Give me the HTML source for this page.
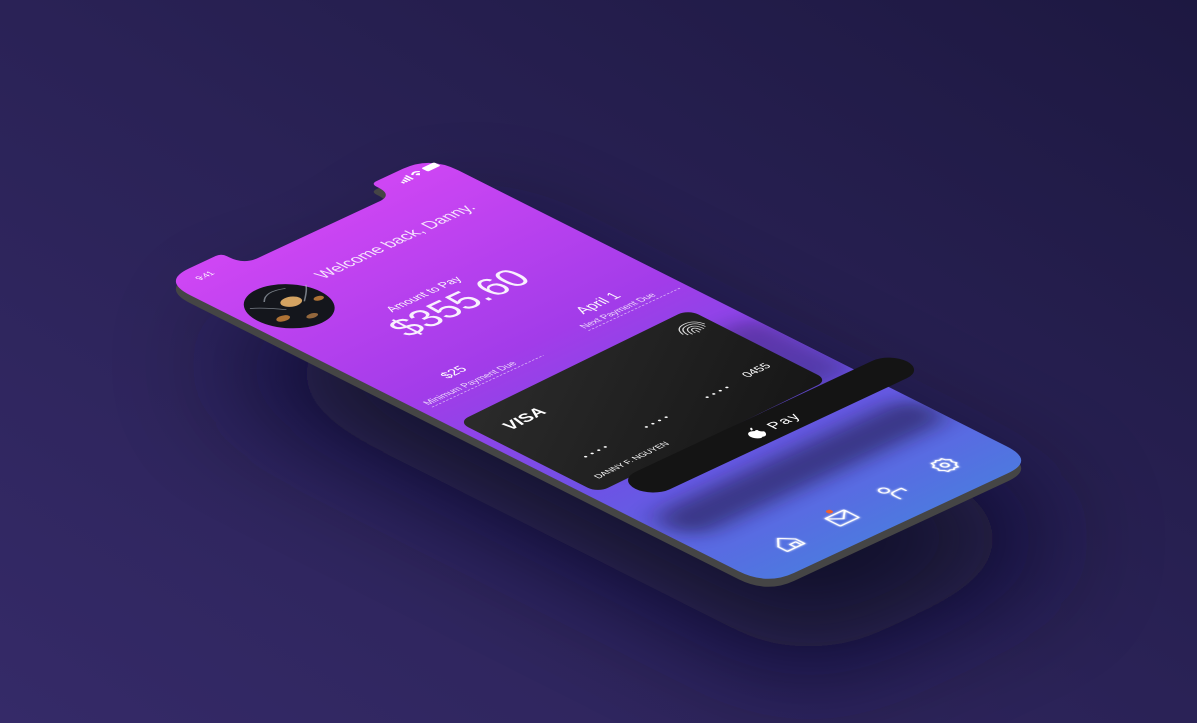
<!DOCTYPE html>
<html><head><meta charset="utf-8"><style>
html,body{margin:0;padding:0;width:1197px;height:723px;overflow:hidden;background:#2a2254}
svg{display:block}
text{font-family:"Liberation Sans",sans-serif}
</style></head><body>
<svg width="1197" height="723" viewBox="0 0 1197 723" xmlns="http://www.w3.org/2000/svg">
<defs>
<linearGradient id="bg" x1="0" y1="1" x2="1" y2="0">
<stop offset="0" stop-color="#352a68"/><stop offset="0.5" stop-color="#2a2256"/><stop offset="1" stop-color="#1d1841"/>
</linearGradient>
<linearGradient id="ph" gradientUnits="userSpaceOnUse" x1="0" y1="0" x2="0" y2="812">
<stop offset="0" stop-color="#cf46f4"/><stop offset="0.4" stop-color="#a23ce9"/><stop offset="0.7" stop-color="#6d52e5"/><stop offset="1" stop-color="#4e78e0"/>
</linearGradient>
<linearGradient id="cd" x1="0" y1="0" x2="1" y2="1">
<stop offset="0" stop-color="#2b2b2b"/><stop offset="1" stop-color="#161616"/>
</linearGradient>
<filter id="blur40" x="-50%" y="-50%" width="200%" height="200%"><feGaussianBlur stdDeviation="60"/></filter>
<filter id="blur12" x="-50%" y="-50%" width="200%" height="200%"><feGaussianBlur stdDeviation="14"/></filter>
<filter id="glow" x="-50%" y="-50%" width="200%" height="200%"><feGaussianBlur stdDeviation="1.5" result="b"/><feMerge><feMergeNode in="b"/><feMergeNode in="SourceGraphic"/></feMerge></filter>
<path id="phone" d="M38 0 H75 Q83 0 83 8 V10 Q83 30 103 30 H272 Q292 30 292 10 V8 Q292 0 300 0 H337 Q375 0 375 38 V774 Q375 812 337 812 H38 Q0 812 0 774 V38 Q0 0 38 0 Z"/>
<clipPath id="phclip"><use href="#phone"/></clipPath>
</defs>
<rect width="1197" height="723" fill="url(#bg)"/>

<g transform="translate(40,80)" opacity="0.9" filter="url(#blur40)">
<g transform="matrix(0.715,-0.333,0.745,0.375,162,281)"><use href="#phone" fill="#110e26"/></g>
</g>

<g transform="translate(0,8)">
<g transform="matrix(0.715,-0.333,0.745,0.375,162,281)"><use href="#phone" fill="#454545"/></g>
</g>

<g transform="matrix(0.715,-0.333,0.745,0.375,162,281)">
<use href="#phone" fill="url(#ph)"/>
<g clip-path="url(#phclip)">
<rect x="10" y="640" width="370" height="60" rx="30" fill="#1a1440" opacity="0.55" filter="url(#blur12)"/>
<rect x="60" y="430" width="320" height="140" rx="20" fill="#1a1440" opacity="0.35" filter="url(#blur12)"/>
</g>
<text x="28" y="24" font-size="11" fill="#fff">9:41</text>
<g fill="#fff">
<rect x="316" y="17" width="2.5" height="4"/><rect x="320" y="15" width="2.5" height="6"/><rect x="324" y="13" width="2.5" height="8"/><rect x="328" y="11" width="2.5" height="10"/>
<path d="M334 14 Q340 8 346 14 L344.5 15.5 Q340 11 335.5 15.5Z M337 17 Q340 14 343 17 L340 20Z"/>
<rect x="351" y="11" width="18" height="9" rx="2"/>
</g>
<circle cx="56" cy="117" r="44" fill="#14161c"/>
<ellipse cx="64" cy="112" rx="12" ry="9" fill="#e9b36a" opacity="0.9"/>
<ellipse cx="34" cy="130" rx="8" ry="5" fill="#d58a3c" opacity="0.8"/>
<ellipse cx="89" cy="125" rx="6" ry="4" fill="#d58a3c" opacity="0.8"/>
<ellipse cx="59" cy="145" rx="7" ry="4" fill="#c98a4a" opacity="0.7"/>
<path d="M44 95 Q59 80 79 90 M49 120 Q34 100 24 95 M74 120 Q94 105 99 98" stroke="#b7c2cc" stroke-width="1.5" fill="none" opacity="0.6"/>
<text x="120" y="102" font-size="21" fill="#fff" fill-opacity="0.85">Welcome back, Danny.</text>
<text x="122" y="192" font-size="15" fill="#fff" fill-opacity="0.95">Amount to Pay</text>
<text x="98" y="238" font-size="48" fill="#fff" fill-opacity="0.92">$355.60</text>
<text x="258" y="318" font-size="19" fill="#fff" fill-opacity="0.95">April 1</text>
<text x="238" y="339" font-size="12" fill="#fff" fill-opacity="0.8">Next Payment Due</text>
<line x1="238" y1="344" x2="366" y2="344" stroke="#fff" stroke-opacity="0.7" stroke-dasharray="3 2"/>
<text x="66" y="320" font-size="17" fill="#fff">$25</text>
<text x="14" y="344" font-size="12" fill="#fff" fill-opacity="0.8">Minimum Payment Due</text>
<line x1="14" y1="349" x2="170" y2="349" stroke="#fff" stroke-opacity="0.7" stroke-dasharray="3 2"/>
<g stroke="#fff" stroke-width="2" fill="none" filter="url(#glow)" stroke-linejoin="round" stroke-linecap="round">
<path d="M64 766 L76 754 L88 766 V778 H64 Z M76 778 V770 H84 V778"/>
<rect x="139" y="757" width="26" height="20" rx="1"/><path d="M139 758 L152 769 L165 758"/>
<circle cx="222" cy="756" r="5"/><path d="M222 778 V770 Q222 764 228 764 H238 V770"/>
<circle cx="303" cy="760" r="4"/>
<path d="M303 748 L306 750 L310 749 L311 753 L315 756 L313 760 L315 764 L311 767 L310 771 L306 770 L303 772 L300 770 L296 771 L295 767 L291 764 L293 760 L291 756 L295 753 L296 749 L300 750 Z"/>
</g>
<circle cx="152" cy="750" r="3.5" fill="#f0622e"/>
</g>

<g transform="matrix(0.715,-0.35,0.717,0.363,458,422)">
<rect x="0" y="0" width="322" height="195" rx="14" fill="url(#cd)"/>
<text x="26" y="48" font-size="22" font-weight="bold" font-style="italic" fill="#fff">VISA</text>
<g stroke="#ddd" stroke-width="1.3" fill="none">
<path d="M286 36 Q286 22 298 22 Q310 22 310 36"/><path d="M290 38 Q290 26 298 26 Q306 26 306 38"/><path d="M294 38 Q294 30 298 30 Q302 30 302 38"/><path d="M298 34 V40"/><path d="M283 32 Q285 18 298 18 Q311 18 313 32"/>
</g>
<g fill="#fff">
<text x="40" y="140" font-size="12" letter-spacing="5">••••</text>
<text x="125" y="140" font-size="12" letter-spacing="5">••••</text>
<text x="210" y="140" font-size="12" letter-spacing="5">••••</text>
<text x="268" y="137" font-size="15">0455</text>
<text x="20" y="176" font-size="11">DANNY F. NGUYEN</text>
</g>
</g>

<g transform="matrix(0.715,-0.335,0.717,0.363,618,480)">
<rect x="0" y="0" width="380" height="48" rx="24" fill="#141414"/>
<path d="M170 22 Q164 17 160 22 Q156 28 161 34 Q164 37 167 35 Q170 37 173 34 Q176 31 176 28 Q172 26 173 22 Q171 20 170 22 Z M168 19 Q168 15 172 14 Q172 18 168 19Z" fill="#fff"/>
<text x="186" y="33" font-size="19" letter-spacing="2" fill="#fff">Pay</text>
</g>
</svg>
</body></html>
